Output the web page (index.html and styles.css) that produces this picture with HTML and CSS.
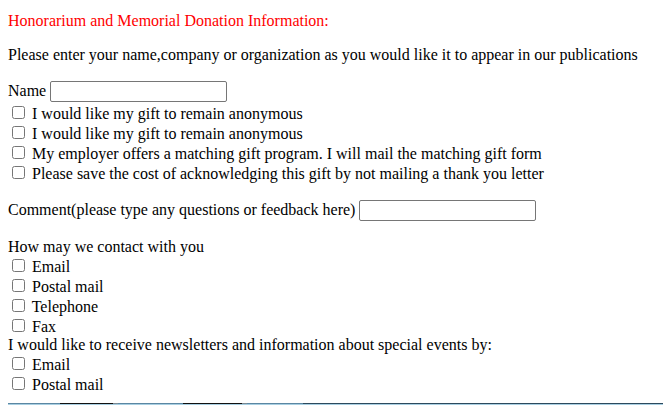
FILE: index.html
```html
<!DOCTYPE html>
<html>
<head>
<meta charset="utf-8">
<link rel="stylesheet" href="styles.css">
</head>
<body>
<p class="title">Honorarium and Memorial Donation Information:</p>
<p>Please enter your name,company or organization as you would like it to appear in our publications</p>
Name <input type="text" class="field"><br>
<input type="checkbox"> I would like my gift to remain anonymous<br>
<input type="checkbox"> I would like my gift to remain anonymous<br>
<input type="checkbox"> My employer offers a matching gift program. I will mail the matching gift form<br>
<input type="checkbox"> Please save the cost of acknowledging this gift by not mailing a thank you letter<br>
<p>Comment(please type any questions or feedback here) <input type="text" class="field"></p>
How may we contact with you<br>
<input type="checkbox"> Email<br>
<input type="checkbox"> Postal mail<br>
<input type="checkbox"> Telephone<br>
<input type="checkbox"> Fax<br>
I would like to receive newsletters and information about special events by:<br>
<input type="checkbox"> Email<br>
<input type="checkbox"> Postal mail<br>
<div class="banner">
  <div class="banner-top">
    <span class="seg seg-blue w60"></span><span class="seg seg-black w53"></span><span class="seg seg-grey w5"></span><span class="seg seg-blue w65"></span><span class="seg seg-black w59"></span><span class="seg seg-grey w5"></span><span class="seg seg-blue w56"></span><span class="seg seg-navy grow"></span>
  </div>
  <div class="banner-bottom"></div>
</div>
</body>
</html>
```
FILE: styles.css
```css
body {
  margin: 8px;
  font-family: "Liberation Serif", "Times New Roman", serif;
  font-size: 16px;
  color: #000;
  background: #fff;
}
.title {
  color: #ff0000;
  margin-top: 4px;
}
.field {
  font-family: "Liberation Sans", Arial, sans-serif;
  font-size: 13.33px;
  box-sizing: border-box;
  width: 177px;
  height: 21px;
  margin: 1px 0;
  border: 1px solid #767676;
  border-radius: 2px;
  padding: 1px 2px;
}
.banner {
  margin: 9px -8px 0;
}
.banner-top {
  display: flex;
  height: 1px;
}
.seg { display: block; height: 1px; }
.seg-blue { background: #5b87a3; }
.seg-black { background: #111; }
.seg-grey { background: #7d8a93; }
.seg-navy { background: #2c4a5e; }
.w60 { width: 60px; }
.w53 { width: 53px; }
.w5 { width: 5px; }
.w65 { width: 65px; }
.w59 { width: 59px; }
.w56 { width: 56px; }
.grow { flex: 1; }
.banner-bottom {
  height: 1px;
  background: #a9cfe2;
}
```
